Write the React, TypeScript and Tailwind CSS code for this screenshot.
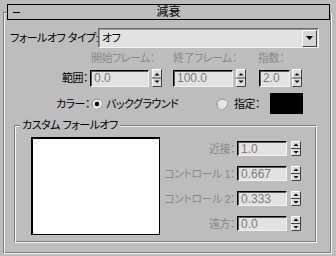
import React from "react";

const Spinner = ({ h }: { h: number }) => {
  const m = h / 2;
  return (
    <svg width={10} height={h} viewBox={`0 0 10 ${h}`} className="block shrink-0">
      <rect x={0} y={0} width={10} height={h} fill="#dcdcdc" />
      <path d={`M0.5 ${h - 0.5}V0.5H9.5`} stroke="#ffffff" fill="none" />
      <path d={`M9.5 0.5V${h - 0.5}H0.5`} stroke="#404040" fill="none" />
      <path d={`M0 ${m}H10`} stroke="#404040" />
      <path d={`M2.5 ${m - 2.5}H7.5L5 ${m - 5}Z`} fill="#000" />
      <path d={`M2.5 ${m + 2.5}H7.5L5 ${m + 5}Z`} fill="#000" />
    </svg>
  );
};

const Radio = ({ on }: { on?: boolean }) => (
  <svg width={12} height={12} viewBox="0 0 12 12" className="block shrink-0">
    <circle cx={6} cy={6} r={5} fill="#e4e4e4" stroke="#8a8a8a" />
    <path d="M2.5 9.5A5 5 0 0 0 9.5 2.5" stroke="#f4f4f4" fill="none" />
    {on && <circle cx={6} cy={6} r={2.2} fill="#000" />}
  </svg>
);

const Field = ({ value, w, h }: { value: string; w: number; h: number }) => (
  <div
    className="flex items-center bg-[#e2e2e2] border border-t-black border-l-black border-r-[#f2f2f2] border-b-[#f2f2f2] shadow-[inset_1px_1px_0_#5a5a5a] pl-[3px] text-[12px] tracking-normal text-[#7c7c7c] shrink-0"
    style={{ width: w, height: h }}
  >
    {value}
  </div>
);

const groove =
  "border border-t-[#7c7c7c] border-l-[#7c7c7c] border-b-[#f4f4f4] border-r-[#f4f4f4] shadow-[inset_1px_1px_0_#f4f4f4,inset_-1px_-1px_0_#7c7c7c]";

const customRows = [
  { label: "近接：", value: "1.0" },
  { label: "コントロール 1：", value: "0.667" },
  { label: "コントロール 2：", value: "0.333" },
  { label: "遠方：", value: "0.0" },
];

export default function App() {
  return (
    <div
      className="w-[336px] h-[256px] bg-[#bdbdbd] pt-[12px] pl-[3px] overflow-hidden text-[11px] leading-[14px] tracking-[-0.5px] text-black [font-feature-settings:'palt'] font-['Liberation_Sans','Noto_Sans_CJK_JP',sans-serif]"
    >
      <div className={`w-[329px] h-[242px] flex flex-col ${groove}`}>
        {/* rollout title */}
        <div className="-mt-[9px] ml-[3px] w-[323px] h-[16px] border border-black bg-[#bdbdbd] flex items-center">
          <div className="w-[24px] pl-[5px]">
            <div className="w-[7px] h-[1px] bg-black" />
          </div>
          <div className="flex-1 text-center text-[12px] tracking-normal">減衰</div>
          <div className="w-[24px]" />
        </div>

        {/* falloff type */}
        <div className="mt-[8px] h-[20px] flex items-center">
          <div className="w-[94px] pl-[6px] pr-[1px] flex justify-between whitespace-nowrap">
            <span>フォールオフ タイプ</span>
            <span>:</span>
          </div>
          <div className="w-[221px] h-[20px] flex items-center bg-[#e2e2e2] border border-t-[#6a6a6a] border-l-[#6a6a6a] border-r-[#f4f4f4] border-b-[#f4f4f4] shadow-[inset_1px_1px_0_#9a9a9a]">
            <div className="flex-1 pl-[3px]">オフ</div>
            <div className="w-[15px] h-[17px] mr-[1px] flex items-center justify-center bg-[#d6d6d6] border border-t-white border-l-white border-r-[#404040] border-b-[#404040]">
              <svg width={7} height={4} viewBox="0 0 7 4" className="block">
                <path d="M0 0H7L3.5 4Z" fill="#000" />
              </svg>
            </div>
          </div>
        </div>

        {/* range labels */}
        <div className="mt-[3px] h-[14px] flex text-[#8a8a8a] whitespace-nowrap">
          <div className="w-[87px]" />
          <div className="w-[82px]">開始フレーム：</div>
          <div className="w-[85px]">終了フレーム：</div>
          <div>指数：</div>
        </div>

        {/* range fields */}
        <div className="mt-[4px] h-[18px] flex items-center">
          <div className="w-[86px] pr-[2px] text-right">範囲：</div>
          <Field value="0.0" w={59} h={17} />
          <div className="ml-[3px]">
            <Spinner h={18} />
          </div>
          <div className="ml-[11px]">
            <Field value="100.0" w={60} h={17} />
          </div>
          <div className="ml-[3px]">
            <Spinner h={18} />
          </div>
          <div className="ml-[13px]">
            <Field value="2.0" w={31} h={17} />
          </div>
          <div className="ml-[2px]">
            <Spinner h={18} />
          </div>
        </div>

        {/* colour */}
        <div className="mt-[6px] h-[21px] flex items-center">
          <div className="w-[87px] pr-[1px] text-right">カラー：</div>
          <Radio on />
          <div className="w-[113px] pl-[3px] whitespace-nowrap">バックグラウンド</div>
          <Radio />
          <div className="w-[42px] pl-[6px]">指定：</div>
          <div className="w-[33px] h-[21px] bg-black" />
        </div>

        {/* custom falloff group */}
        <div className={`mt-[11px] ml-[10px] w-[303px] h-[118px] flex flex-col ${groove}`}>
          <div className="-mt-[8px] ml-[5px] w-fit px-[2px] bg-[#bdbdbd] whitespace-nowrap">カスタム フォールオフ</div>
          <div className="mt-[5px] flex">
            <div className="ml-[16px] w-[129px] h-[98px] bg-white border border-black shadow-[inset_1px_1px_0_#000]" />
            <div className="mt-[4px] flex flex-col gap-[10px]">
              {customRows.map((r) => (
                <div key={r.label} className="h-[15px] flex items-center">
                  <div className="w-[77px] pr-[2px] text-right text-[#8a8a8a] whitespace-nowrap">{r.label}</div>
                  <Field value={r.value} w={50} h={15} />
                  <div className="ml-[4px]">
                    <Spinner h={15} />
                  </div>
                </div>
              ))}
            </div>
          </div>
        </div>
      </div>
    </div>
  );
}
